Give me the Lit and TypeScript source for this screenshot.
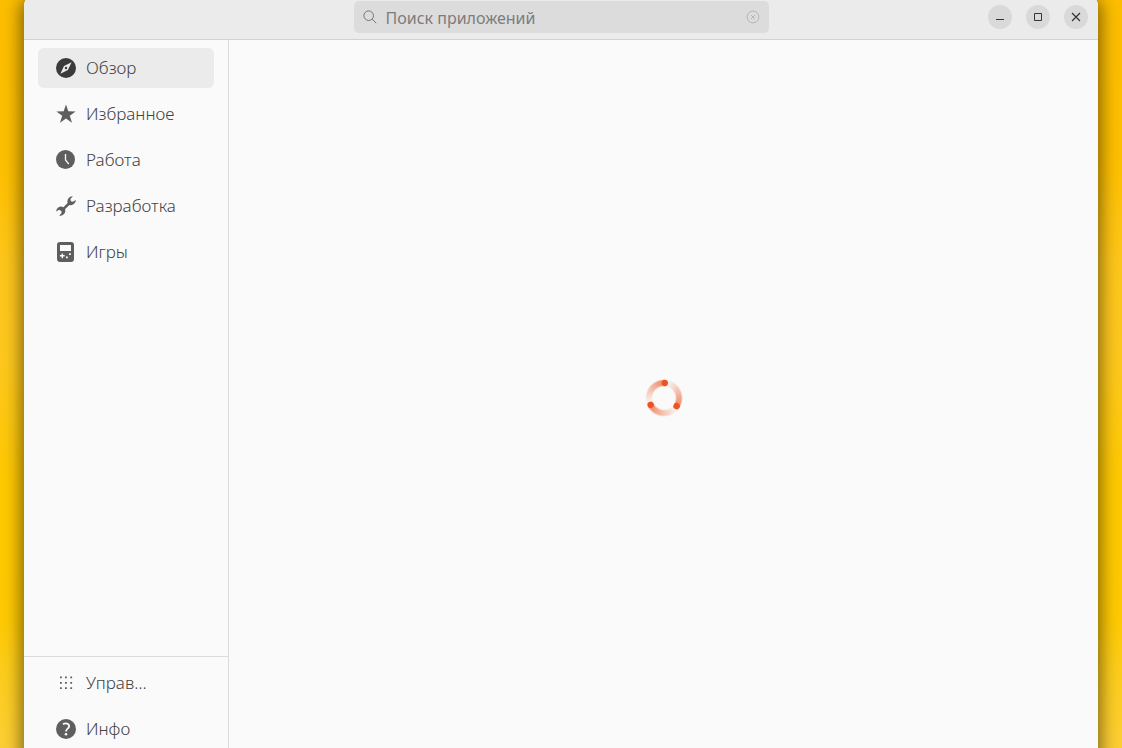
import { LitElement, html, css, svg } from "lit";
import { customElement, property, state } from "lit/decorators.js";
import { classMap } from "lit/directives/class-map.js";

const icons: Record<string, unknown> = {
  compass: svg`<path fill-rule="evenodd" d="M10 0a10 10 0 1 0 0 20a10 10 0 0 0 0-20zM15.6 4.2L11.9 12.1L4.4 15.8L8 7.9zM10 8.8a1.2 1.2 0 1 0 0 2.4a1.2 1.2 0 0 0 0-2.4z"/>`,
  star: svg`<path d="M10 .4L12.3 7.3L19.6 7.4L13.8 11.8L16 18.8L10 14.6L4 18.8L6.2 11.8L.4 7.4L7.7 7.3z"/>`,
  clock: svg`<circle cx="9.5" cy="9.5" r="9.5"/><path class="cut" d="M9.5 4V10L12.8 14.2"/>`,
  wrench: svg`<path d="M16.9.3A5.2 5.2 0 0 0 11.6 7L7.4 11.2A4.8 4.8 0 0 0 .2 15.4L3.1 13.7L5.6 15.2L5.4 17.2L3.3 19.5A4.8 4.8 0 0 0 9 13.3L13.4 8.9A5 5 0 0 0 19.8 3.9L16.8 5.8L14.8 5.2L14.4 3z"/>`,
  game: svg`<path fill-rule="evenodd" d="M4 0H15A3 3 0 0 1 18 3V17A3 3 0 0 1 15 20H4A3 3 0 0 1 1 17V3A3 3 0 0 1 4 0zM4 3V9H15V3zM5.6 11.4V13.1H3.9V14.5H5.6V16.2H7V14.5H8.7V13.1H7V11.4zM13 11.3V13.1H14.8V11.3zM10 14.5V16.3H11.8V14.5z"/>`,
  grid: svg`<path d="M4 3.5h1.8v1.8H4zM9 3.5h1.8v1.8H9zM14.3 3.5h1.8v1.8h-1.8zM4 9h1.8v1.8H4zM9 9h1.8v1.8H9zM14.3 9h1.8v1.8h-1.8zM4 14.3h1.8v1.8H4zM9 14.3h1.8v1.8H9zM14.3 14.3h1.8v1.8h-1.8z"/>`,
  help: svg`<circle cx="10" cy="10" r="10"/><path class="cut mark" d="M7 5.1C9.5 3.9 13.1 4.4 13.1 7.2C13.1 9.8 10 9.5 10 12.5"/><circle class="dot" cx="10" cy="15.2" r="1.3"/>`,
};

@customElement("nav-item")
export class NavItem extends LitElement {
  @property() icon = "";
  @property() label = "";
  @property({ type: Boolean }) selected = false;

  static styles = css`
    :host { display: block; }
    .item {
      display: flex;
      align-items: center;
      gap: 10px;
      width: 100%;
      height: 40px;
      padding: 0 18px;
      border: 0;
      border-radius: 6px;
      background: transparent;
      color: #444;
      font: 300 17px/24px "Noto Sans", "Open Sans", sans-serif;
      text-align: left;
    }
    .selected { background: #ebebeb; }
    .icon { flex: none; width: 20px; height: 20px; fill: #5e5e5e; }
    .selected .icon { fill: #3a3a3a; }
    .cut { fill: none; stroke: #fafafa; stroke-width: 1.3; }
    .mark { stroke-width: 1.8; }
    .dot { fill: #fafafa; }
  `;

  render() {
    return html`<button
      class=${classMap({ item: true, selected: this.selected })}
      aria-current=${this.selected ? "page" : "false"}
    >
      <svg class="icon" viewBox="0 0 20 20" aria-hidden="true">${icons[this.icon]}</svg>
      <span>${this.label}</span>
    </button>`;
  }
}

@customElement("busy-spinner")
export class BusySpinner extends LitElement {
  static styles = css`
    :host { display: grid; width: 38px; height: 38px; }
    .ring, .heads { grid-area: 1 / 1; width: 38px; height: 38px; }
    .ring {
      border-radius: 50%;
      background: repeating-conic-gradient(
        from 3deg,
        rgba(233, 84, 32, 0) 0deg,
        rgba(233, 84, 32, 0.12) 25deg,
        rgba(233, 84, 32, 0.7) 120deg
      );
      mask: radial-gradient(circle, transparent 11px, #000 13px, #000 17px, transparent 19px);
    }
    .heads { fill: #ec5420; }
  `;

  render() {
    return html`<div class="ring"></div>
      <svg class="heads" viewBox="-19 -19 38 38" role="img" aria-label="Загрузка">
        ${[3, 123, 243].map((a) => svg`<circle cy="-15" r="3.2" transform="rotate(${a})"/>`)}
      </svg>`;
  }
}

@customElement("app-root")
export class AppRoot extends LitElement {
  @state() private current = "compass";

  private main = [
    ["compass", "Обзор"],
    ["star", "Избранное"],
    ["clock", "Работа"],
    ["wrench", "Разработка"],
    ["game", "Игры"],
  ];
  private extra = [
    ["grid", "Управ…"],
    ["help", "Инфо"],
  ];

  static styles = css`
    :host {
      display: flex;
      height: 100vh;
      overflow: hidden;
      padding: 0 24px;
      box-sizing: border-box;
      background: linear-gradient(#fcbd00, #fdbf00 22%, #fdc61c 36%, #fdc71e 48%, #fec800 65%, #fec903 83%, #fccc1c 90%, #fcce34);
      font-family: "Noto Sans", "Open Sans", sans-serif;
    }
    .window {
      flex: 1;
      display: flex;
      flex-direction: column;
      margin: -6px 0 -8px;
      border-radius: 12px 12px 0 0;
      background: #fafafa;
      box-shadow: 0 6px 16px 4px rgba(0, 0, 0, 0.45);
    }
    .header {
      display: grid;
      grid-template-columns: 1fr minmax(0, 415px) 1fr;
      align-items: center;
      height: 45px;
      border-bottom: 1px solid #d2d2d2;
      border-radius: 12px 12px 0 0;
      background: #ebebeb;
    }
    .search {
      grid-column: 2;
      display: flex;
      align-items: center;
      gap: 9px;
      height: 32px;
      padding: 0 9px;
      border-radius: 5px;
      background: #dcdcdc;
    }
    .glyph { display: block; width: 14px; height: 14px; fill: none; stroke: #777; }
    .field {
      flex: 1;
      min-width: 0;
      padding: 2px 0 0;
      border: 0;
      outline: 0;
      background: none;
      color: #7c7c7c;
      font: 400 16px/24px "Noto Sans", "Open Sans", sans-serif;
    }
    .field::placeholder { color: #7c7c7c; opacity: 1; }
    .clear { padding: 0; border: 0; background: none; }
    .faint { stroke: #b5b5b5; }
    .controls { display: flex; justify-content: flex-end; gap: 14px; padding-right: 10px; }
    .control {
      display: grid;
      place-items: center;
      width: 24px;
      height: 24px;
      padding: 0;
      border: 0;
      border-radius: 50%;
      background: #d9d9d9;
    }
    .sign { width: 12px; height: 12px; fill: none; stroke: #333; }
    .body { flex: 1; display: flex; min-height: 0; }
    .sidebar {
      display: flex;
      flex-direction: column;
      justify-content: space-between;
      width: 204px;
      border-right: 1px solid #dcdcdc;
    }
    .list { display: flex; flex-direction: column; gap: 6px; padding: 8px 14px; }
    .foot { border-top: 1px solid #dcdcdc; padding: 6px 14px 7px; }
    .content { flex: 1; display: grid; place-items: center; }
  `;

  private items(list: string[][]) {
    return list.map(
      ([icon, label]) => html`<nav-item
        .icon=${icon}
        .label=${label}
        .selected=${this.current === icon}
        @click=${() => (this.current = icon)}
      ></nav-item>`
    );
  }

  render() {
    return html`<div class="window">
      <header class="header">
        <div class="search">
          <svg class="glyph" viewBox="0 0 14 14" aria-hidden="true">
            <circle cx="5.7" cy="5.7" r="4.8" /><path d="M9.2 9.2L13.2 13.2" />
          </svg>
          <input class="field" type="text" aria-label="Поиск приложений" placeholder="Поиск приложений" />
          <button class="clear" aria-label="Очистить">
            <svg class="glyph faint" viewBox="0 0 14 14">
              <circle cx="7" cy="7" r="5.9" /><path d="M5 5L9 9M9 5L5 9" />
            </svg>
          </button>
        </div>
        <div class="controls">
          <button class="control" aria-label="Свернуть">
            <svg class="sign" viewBox="0 0 12 12"><path d="M2 8.5H10" /></svg>
          </button>
          <button class="control" aria-label="Развернуть">
            <svg class="sign" viewBox="0 0 12 12"><path d="M2.5 2.5H9.5V9.5H2.5z" /></svg>
          </button>
          <button class="control" aria-label="Закрыть">
            <svg class="sign" viewBox="0 0 12 12"><path stroke-width="1.2" d="M2 2L10 10M10 2L2 10" /></svg>
          </button>
        </div>
      </header>
      <div class="body">
        <nav class="sidebar">
          <div class="list">${this.items(this.main)}</div>
          <div class="list foot">${this.items(this.extra)}</div>
        </nav>
        <main class="content"><busy-spinner></busy-spinner></main>
      </div>
    </div>`;
  }
}
